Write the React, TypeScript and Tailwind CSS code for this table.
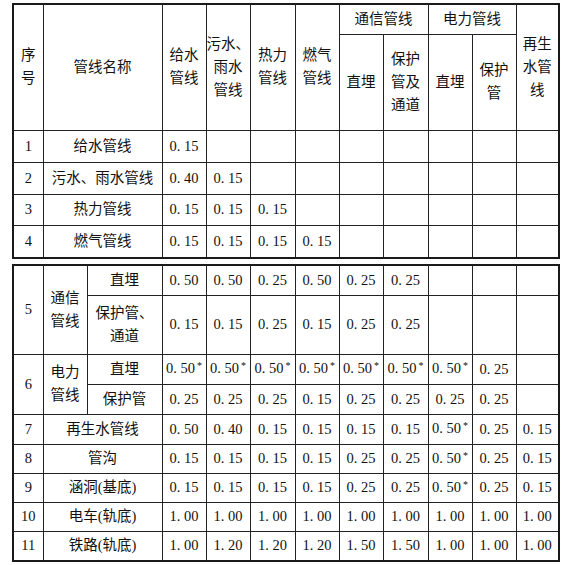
import React from 'react';

const cols = [30, 44, 75, 44, 44, 45, 44, 44, 45, 44, 44, 43];

type Cell = string;

interface RowProps {
    seq: string;
    name: string;
    values: Cell[];
    h: string;
}

function Val({ v }: { v: Cell }) {
    if (v.endsWith('*')) {
        return (
            <span className="whitespace-nowrap">
                {v.slice(0, -1)}
                <span className="relative -top-[4px] ml-[2px] text-[10px]">*</span>
            </span>
        );
    }
    return <span className="whitespace-nowrap">{v}</span>;
}

function Colgroup() {
    return (
        <colgroup>
            {cols.map((w, i) => (
                <col key={i} style={{ width: w }} />
            ))}
        </colgroup>
    );
}

const td = "border border-[#222] p-0 text-center align-middle whitespace-nowrap";

function SimpleRow({ seq, name, values, h }: RowProps) {
    return (
        <tr className={h}>
            <td className={td}>{seq}</td>
            <td className={td} colSpan={2}>{name}</td>
            {values.map((v, i) => (
                <td key={i} className={td}>
                    <Val v={v} />
                </td>
            ))}
        </tr>
    );
}

const top = [
    { seq: '1', name: '给水管线', values: ['0. 15', '', '', '', '', '', '', '', ''], h: 'h-[32px]' },
    { seq: '2', name: '污水、雨水管线', values: ['0. 40', '0. 15', '', '', '', '', '', '', ''], h: 'h-[32px]' },
    { seq: '3', name: '热力管线', values: ['0. 15', '0. 15', '0. 15', '', '', '', '', '', ''], h: 'h-[31px]' },
    { seq: '4', name: '燃气管线', values: ['0. 15', '0. 15', '0. 15', '0. 15', '', '', '', '', ''], h: 'h-[33px]' },
];

const bottom = [
    { seq: '7', name: '再生水管线', values: ['0. 50', '0. 40', '0. 15', '0. 15', '0. 15', '0. 15', '0. 50*', '0. 25', '0. 15'], h: 'h-[30px]' },
    { seq: '8', name: '管沟', values: ['0. 15', '0. 15', '0. 15', '0. 15', '0. 25', '0. 25', '0. 50*', '0. 25', '0. 15'], h: 'h-[29px]' },
    { seq: '9', name: '涵洞(基底)', values: ['0. 15', '0. 15', '0. 15', '0. 15', '0. 25', '0. 25', '0. 50*', '0. 25', '0. 15'], h: 'h-[29px]' },
    { seq: '10', name: '电车(轨底)', values: ['1. 00', '1. 00', '1. 00', '1. 00', '1. 00', '1. 00', '1. 00', '1. 00', '1. 00'], h: 'h-[29px]' },
    { seq: '11', name: '铁路(轨底)', values: ['1. 00', '1. 20', '1. 20', '1. 20', '1. 50', '1. 50', '1. 00', '1. 00', '1. 00'], h: 'h-[30px]' },
];

export default function App() {
    return (
        <div className="w-[564px] h-[565px] bg-white text-[#111] text-[14.5px] leading-[23px] font-['Liberation_Serif','Noto_Sans_CJK_SC',serif] pt-[3px] pl-[12px]">
            <table className="border-collapse table-fixed w-[546px] border-2 border-[#1a1a1a]">
                <Colgroup />
                <tbody>
                    <tr className="h-[30px]">
                        <td className={td} rowSpan={2}>序<br />号</td>
                        <td className={td} rowSpan={2} colSpan={2}>管线名称</td>
                        <td className={td} rowSpan={2}>给水<br />管线</td>
                        <td className={td} rowSpan={2}>污水、<br />雨水<br />管线</td>
                        <td className={td} rowSpan={2}>热力<br />管线</td>
                        <td className={td} rowSpan={2}>燃气<br />管线</td>
                        <td className={td} colSpan={2}>通信管线</td>
                        <td className={td} colSpan={2}>电力管线</td>
                        <td className={td} rowSpan={2}>再生<br />水管<br />线</td>
                    </tr>
                    <tr className="h-[96px]">
                        <td className={td}>直埋</td>
                        <td className={td}>保护<br />管及<br />通道</td>
                        <td className={td}>直埋</td>
                        <td className={td}>保护<br />管</td>
                    </tr>
                    {top.map((r) => (
                        <SimpleRow key={r.seq} {...r} />
                    ))}
                </tbody>
            </table>

            <table className="mt-[5px] border-collapse table-fixed w-[546px] border-2 border-[#1a1a1a]">
                <Colgroup />
                <tbody>
                    <tr className="h-[30px]">
                        <td className={td} rowSpan={2}>5</td>
                        <td className={td} rowSpan={2}>通信<br />管线</td>
                        <td className={td}>直埋</td>
                        {['0. 50', '0. 50', '0. 25', '0. 50', '0. 25', '0. 25', '', '', ''].map((v, i) => (
                            <td key={i} className={td}><Val v={v} /></td>
                        ))}
                    </tr>
                    <tr className="h-[59px]">
                        <td className={td}>保护管、<br />通道</td>
                        {['0. 15', '0. 15', '0. 25', '0. 15', '0. 25', '0. 25', '', '', ''].map((v, i) => (
                            <td key={i} className={td}><Val v={v} /></td>
                        ))}
                    </tr>
                    <tr className="h-[30px]">
                        <td className={td} rowSpan={2}>6</td>
                        <td className={td} rowSpan={2}>电力<br />管线</td>
                        <td className={td}>直埋</td>
                        {['0. 50*', '0. 50*', '0. 50*', '0. 50*', '0. 50*', '0. 50*', '0. 50*', '0. 25', ''].map((v, i) => (
                            <td key={i} className={td}><Val v={v} /></td>
                        ))}
                    </tr>
                    <tr className="h-[30px]">
                        <td className={td}>保护管</td>
                        {['0. 25', '0. 25', '0. 25', '0. 15', '0. 25', '0. 25', '0. 25', '0. 25', ''].map((v, i) => (
                            <td key={i} className={td}><Val v={v} /></td>
                        ))}
                    </tr>
                    {bottom.map((r) => (
                        <SimpleRow key={r.seq} {...r} />
                    ))}
                </tbody>
            </table>
        </div>
    );
}
